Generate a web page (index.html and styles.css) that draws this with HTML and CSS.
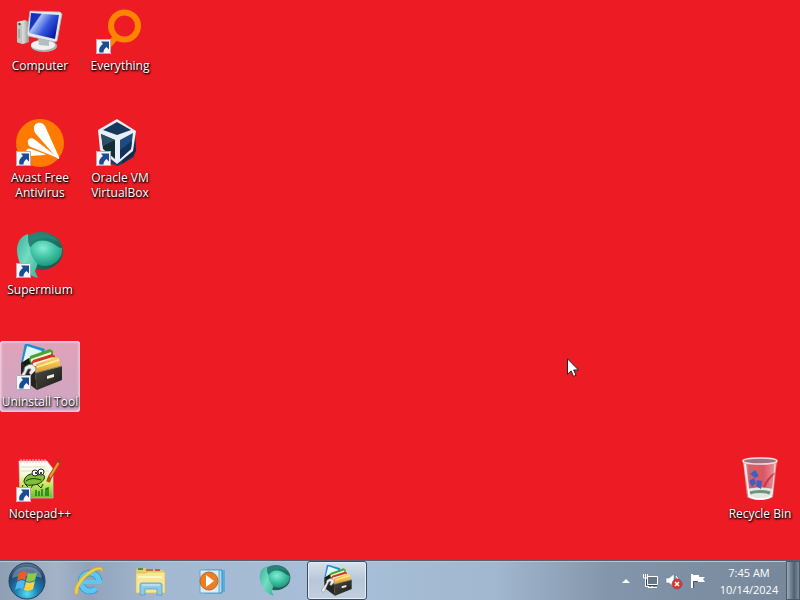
FILE: index.html
```html
<!DOCTYPE html>
<html lang="en">
<head>
<meta charset="utf-8">
<title>Desktop</title>
<link rel="stylesheet" href="styles.css">
</head>
<body>
<svg class="defs" aria-hidden="true">
  <defs>
    <linearGradient id="screen" x1="0" y1="0" x2="1" y2=".6"><stop offset="0" stop-color="#1029a5"/><stop offset=".3" stop-color="#1836c4"/><stop offset=".34" stop-color="#a9bff5"/><stop offset=".65" stop-color="#3556dd"/><stop offset="1" stop-color="#0a1aa5"/></linearGradient>
    <linearGradient id="metal" x1="0" y1="0" x2="1" y2="0"><stop offset="0" stop-color="#f4f4f0"/><stop offset=".6" stop-color="#cfd2cc"/><stop offset="1" stop-color="#8d928f"/></linearGradient>
    <radialGradient id="teal" cx=".4" cy=".3" r=".75"><stop offset="0" stop-color="#86ecd2"/><stop offset=".5" stop-color="#3fc4a4"/><stop offset="1" stop-color="#1d8f78"/></radialGradient>
    <linearGradient id="tealDark" x1="0" y1="0" x2="1" y2="1"><stop offset="0" stop-color="#2a8f7e"/><stop offset=".45" stop-color="#1d7a69"/><stop offset="1" stop-color="#244a45"/></linearGradient>
    <linearGradient id="blade" x1="0" y1="0" x2="1" y2="1"><stop offset="0" stop-color="#3fae98"/><stop offset=".5" stop-color="#74dcc2"/><stop offset="1" stop-color="#3bb398"/></linearGradient>
    <linearGradient id="folder" x1="0" y1="0" x2="0" y2="1"><stop offset="0" stop-color="#ffd766"/><stop offset="1" stop-color="#dc9324"/></linearGradient>
    <linearGradient id="box" x1="0" y1="0" x2="1" y2="1"><stop offset="0" stop-color="#4b4b42"/><stop offset="1" stop-color="#1b1c17"/></linearGradient>
    <linearGradient id="note" x1="0" y1="0" x2="0" y2="1"><stop offset="0" stop-color="#ffffff"/><stop offset=".35" stop-color="#f4fbd8"/><stop offset=".65" stop-color="#c4e85c"/><stop offset="1" stop-color="#63bd2b"/></linearGradient>
    <linearGradient id="glass" x1="0" y1="0" x2="1" y2="0"><stop offset="0" stop-color="#f1e5e6" stop-opacity=".9"/><stop offset=".18" stop-color="#b98a94" stop-opacity=".65"/><stop offset=".6" stop-color="#d0808b" stop-opacity=".6"/><stop offset="1" stop-color="#e9bdc0" stop-opacity=".85"/></linearGradient>
    <radialGradient id="orb" cx=".5" cy=".85" r=".85"><stop offset="0" stop-color="#59dcf2"/><stop offset=".35" stop-color="#1d83b5"/><stop offset=".75" stop-color="#1c456f"/><stop offset="1" stop-color="#637f99"/></radialGradient>
    <symbol id="arrow" viewBox="0 0 15 15">
      <rect width="15" height="15" fill="#f6f7fa"/>
      <path d="M.5.500h14v14H.5z" fill="none" stroke="#b9a9b2"/>
      <path d="M5 2.500h8v8l-2.500-2.500C8.500 9.500 7.500 11 7.500 13.500H3.500C2.500 10 4 7 7 5z" fill="#184d94"/>
    </symbol>
    <symbol id="supermium" viewBox="0 0 48 48">
      <ellipse cx="25" cy="19" rx="22" ry="19" fill="url(#tealDark)"/>
      <path d="M1 18C1 10 5 4 12 2c0 6 0 9 3 14 4 6 7 9 7 15l-3 8 3 7C9 43 1 31 1 18z" fill="url(#blade)"/>
      <path d="M14 17C16 10 24 7 31 9c8 2 10 7 15 7 1 8-4 14-11 17-7 2-13 1-16-4-2-4-5-7-5-12z" fill="url(#teal)"/>
      <path d="M12 9C20 0 34 0 42 9c-7-2-10-4-16-3-6 0-11 4-12 9z" fill="#2b8477"/>
    </symbol>
    <symbol id="uninstall" viewBox="0 0 48 48">
      <path d="M9-1l20 6-8 18-16-4z" fill="#1b8fd2"/>
      <path d="M11 2l15 5-7 12-12-1z" fill="#e2f5fb"/>
      <path d="M5 19l8-5 33 9-27 8z" fill="#191a15"/>
      <path d="M13 16l1-4 20-7 3 2v10l-20 7z" fill="#48a52d"/>
      <path d="M15 15l20-7v3l-20 7z" fill="#f3f8de"/>
      <path d="M15 20l2-4 19-6 3 2v9L19 28z" fill="#d23322"/>
      <path d="M17 19l20-6v3l-20 7z" fill="#fff1ea"/>
      <path d="M19 27l1-7 15-5 1-2 7 1 2 10-24 8z" fill="url(#folder)"/>
      <path d="M21 23l22-7" stroke="#fff1a1" stroke-width="1.500"/>
      <path d="M5 19l14 10 2 17L5 34z" fill="#25251f"/>
      <path d="M19 29l27-7v14L21 46z" fill="url(#box)"/>
      <path d="M19 29l27-7" stroke="#8a897c"/>
      <path d="M31 32l7-2v3l-7 2z" fill="#f1f0df"/>
      <path d="M12 21c4-2 8 1 8 5l-5 5-2-2 2-4-3 0-3 6-4 9c-2 2-5 0-4-3l7-10c0-3 1-5 4-6z" fill="#edf0f1" stroke="#777d80" stroke-width=".8"/>
    </symbol>
  </defs>
</svg>

<main class="desktop">
  <div class="icons">
    <button class="shortcut" type="button">
      <svg class="art" viewBox="0 0 48 48" aria-hidden="true">
        <path d="M1 14l8-2 4 2v20l-6 2-6-2z" fill="url(#metal)"/>
        <path d="M1 14l5 2v20l-5-2z" fill="#bfc5c1"/><circle cx="3.500" cy="16" r="1.200" fill="#2f4b42"/>
        <path d="M3 21v9" stroke="#858d88"/>
        <ellipse cx="28" cy="38" rx="13" ry="6" fill="#aeb6b5"/><ellipse cx="27" cy="37" rx="12" ry="5" fill="#eff2f0"/>
        <path d="M22 30l11 2v6l-10-1z" fill="#b5bfc3"/>
        <path d="M14 3l30 1 2 2-5 27-2 1-27-6-1-2z" fill="#e4e8e7" stroke="#aab0b7" stroke-width=".8"/>
        <path d="M15 5l28 2-4 24-26-6z" fill="url(#screen)"/>
      </svg>
      <span class="name">Computer</span>
    </button>
    <button class="shortcut" type="button">
      <svg class="art" viewBox="0 0 48 48" aria-hidden="true">
        <path d="M20 29l-8 9" stroke="#ff8500" stroke-width="6"/>
        <circle cx="28.500" cy="18" r="13.500" fill="none" stroke="#ff8500" stroke-width="6"/>
        <use href="#arrow" x="0" y="31" width="15" height="15"/>
      </svg>
      <span class="name">Everything</span>
    </button>
    <button class="shortcut" type="button">
      <svg class="art" viewBox="0 0 48 48" aria-hidden="true">
        <circle cx="24" cy="23" r="24" fill="#ff7a00"/>
        <path d="M18 9c-1-6 7-9 11-3l14 31c1 2-1 3-2 1L20 14c-1-1-2-3-2-5z" fill="#fff"/>
        <path d="M12 23c-1-4 3-6 6-4l22 17c2 1 1 2-1 1L15 27c-2-1-3-2-3-4z" fill="#fff"/>
        <path d="M10 32c0-3 2-4 5-3l14 5c1 1 0 1-1 1l-13 1c-3 0-5-1-5-4z" fill="#fff"/>
        <use href="#arrow" x="0" y="31" width="15" height="15"/>
      </svg>
      <span class="name">Avast Free Antivirus</span>
    </button>
    <button class="shortcut" type="button">
      <svg class="art" viewBox="0 0 48 48" aria-hidden="true">
        <path d="M10 33l27-3 1 7-16 9-11-4z" fill="#1d3c67"/>
        <path d="M39 11l1 20-2 4-12 9z" fill="#152a4a"/>
        <path d="M21-1L2 10l2 20 17 14 16-13 3-20z" fill="#e9f0f5"/>
        <path d="M21 2l14 8-14 5L7 10z" fill="#17375f"/>
        <path d="M5 14l14 6v19L7 29z" fill="#102e35"/>
        <path d="M5 14l14 6-12 6z" fill="#2c4f69"/>
        <path d="M24 20l13-7-2 16-11 10z" fill="#1e4c7f"/>
        <path d="M24 30l12-9-1 8-11 10z" fill="#13315c"/>
        <use href="#arrow" x="0" y="31" width="15" height="15"/>
      </svg>
      <span class="name">Oracle VM VirtualBox</span>
    </button>
    <button class="shortcut" type="button">
      <svg class="art" viewBox="0 0 48 48" aria-hidden="true">
        <use href="#supermium" width="48" height="48"/>
        <use href="#arrow" x="0" y="31" width="15" height="15"/>
      </svg>
      <span class="name">Supermium</span>
    </button>
    <button class="shortcut selected" type="button">
      <svg class="art" viewBox="0 0 48 48" aria-hidden="true">
        <use href="#uninstall" width="48" height="48"/>
        <use href="#arrow" x="0" y="31" width="15" height="15"/>
      </svg>
      <span class="name">Uninstall Tool</span>
    </button>
    <button class="shortcut" type="button">
      <svg class="art" viewBox="0 0 48 48" aria-hidden="true">
        <path d="M3 5h28l6 8v29H4z" fill="url(#note)" stroke="#cfcfc5" stroke-width=".7"/>
        <path d="M5 3v4M8 3v4M11 3v4M14 3v4M17 3v4M20 3v4M23 3v4M26 3v4M29 3v4" stroke="#d8c8c8"/>
        <path d="M5 11h24M5 15h28" stroke="#d6dccd"/>
        <path d="M8 25c1-6 8-9 14-6 5-2 8 1 6 4-2 4-7 6-12 6-5 1-8-1-8-4z" fill="#7dbf35" stroke="#202f12"/>
        <path d="M10 25c4-3 9-3 15-1M9 28l5 5 3-4M21 28l4 4 2-4M12 33c-4 3-7 0-5-4" fill="none" stroke="#1c2f10"/>
        <circle cx="19" cy="17" r="3" fill="#fff" stroke="#222"/><circle cx="25" cy="16" r="3" fill="#fff" stroke="#222"/>
        <circle cx="20" cy="17" r="1"/><circle cx="25" cy="17" r="1"/>
        <path d="M20 40v-6m3 6v-5m3 5v-7m4 7v-7l2-1v8" fill="none" stroke="#1c7a1b" stroke-width="1.500"/>
        <path d="M44 5L34 21l-2 5" stroke="#b7491b" stroke-width="4" fill="none"/>
        <path d="M43 6l-9 15" stroke="#f19a31" stroke-width="2"/><path d="M42 2l4 3-2 3-4-3z" fill="#b63227"/>
        <use href="#arrow" x="0" y="31" width="15" height="15"/>
      </svg>
      <span class="name">Notepad++</span>
    </button>
    <button class="shortcut bin" type="button">
      <svg class="art" viewBox="0 0 48 48" aria-hidden="true">
        <path d="M7 4l4 37c3 4 22 4 26 0l4-37z" fill="url(#glass)"/>
        <path d="M12 33c6-2 18-2 25 0l-1 8c-6 4-20 3-24 0z" fill="#dfe9e1"/>
        <path d="M14 37c5-2 15-2 20 0" fill="none" stroke="#71917d" stroke-width="3"/>
        <path d="M13 40c6 4 17 4 22 0" fill="none" stroke="#fff" stroke-width="2"/>
        <path d="M14 18l5-4 4 6-4 2zM21 24l5 1-1 8-5-3zM13 25l5-3 2 5-4 4z" fill="#405fc1"/>
        <path d="M28 31c3-7 7-11 11-14" fill="none" stroke="#c93446" stroke-width="2"/>
        <path d="M9 8l4 31" stroke="#fff" stroke-opacity=".75" stroke-width="2"/>
        <path d="M39 8l-3 31" stroke="#fff" stroke-opacity=".65"/>
        <ellipse cx="24" cy="5" rx="17" ry="3" fill="#9b7480" stroke="#ede0e1" stroke-width="1.500"/>
      </svg>
      <span class="name">Recycle Bin</span>
    </button>
  </div>
  <svg class="pointer" viewBox="0 0 12 19" aria-hidden="true"><path d="M.5.800v15.500l3.600-3.400 2.400 5.500 2.600-1.100-2.400-5.300h4.800z" fill="#fff" stroke="#222"/></svg>
</main>

<footer class="taskbar">
  <button class="start" type="button" aria-label="Start">
    <svg class="orb" viewBox="0 0 38 38" aria-hidden="true">
      <circle cx="19" cy="19" r="18" fill="url(#orb)" stroke="#24405f"/>
      <path d="M4 16C6 1 32 1 34 16c-8-3-22-3-30 0z" fill="#fff" fill-opacity=".28"/>
      <path d="M11 11c3-2 5-2 8-1l-2 8c-3-1-5-1-8 1z" fill="#ef5a28"/>
      <path d="M20 11c3 1 6 1 9-1l-2 8c-3 2-6 2-9 1z" fill="#8fca45"/>
      <path d="M9 20c3-2 5-2 8-1l-2 8c-3-1-5-1-8 1z" fill="#54b5ee"/>
      <path d="M18 20c3 1 6 1 9-1l-2 8c-3 2-6 2-9 1z" fill="#ffd13d"/>
    </svg>
  </button>
  <nav class="apps" aria-label="Applications">
    <button class="app" type="button" aria-label="Internet Explorer">
      <svg viewBox="0 0 32 32" aria-hidden="true">
        <circle cx="17" cy="17" r="9" fill="none" stroke="#2f93cf" stroke-width="6.500" pathLength="100" stroke-dasharray="87 13" stroke-dashoffset="-13"/>
        <circle cx="17" cy="17" r="9" fill="none" stroke="#5fc6f0" stroke-width="5" pathLength="100" stroke-dasharray="87 13" stroke-dashoffset="-13"/>
        <path d="M10 15h19v4H10z" fill="#5fc6f0"/>
        <path d="M3 30C-2 24 9 8 22 3c6-2 9 0 7 5 0-4-3-4-7-2C12 11 4 22 5 28z" fill="#f3cf45" stroke="#d5a520" stroke-width=".5"/>
      </svg>
    </button>
    <button class="app" type="button" aria-label="Windows Explorer">
      <svg viewBox="0 0 32 32" aria-hidden="true">
        <path d="M1 5l2-2h7l2 2h16l2 3v20H1z" fill="#e9cc67"/>
        <path d="M3 3h5v2H3z" fill="#479447"/><path d="M11 4h7v2h-7z" fill="#b37841"/><path d="M20 4h5v2h-5z" fill="#ca5942"/>
        <path d="M1 8h10l2-1h17v21H1z" fill="#f7e69a" stroke="#d7b952" stroke-width=".7"/>
        <path d="M3 12h24" stroke="#fff4bc" stroke-width="2"/>
        <path d="M5 30V20q0-2 2-2h18q2 0 2 2v10h-5v-6H10v6z" fill="#8fcbe8" stroke="#549bc2" stroke-width=".8"/>
        <path d="M7 20h18" stroke="#d6f4fc"/>
      </svg>
    </button>
    <button class="app" type="button" aria-label="Windows Media Player">
      <svg viewBox="0 0 32 32" aria-hidden="true">
        <path d="M11 5h17v22H11z" fill="#5faeda"/><path d="M8 5h17v23H8z" fill="#add9ef" stroke="#398bbd"/><path d="M3 5h19v23H3z" fill="#d9edf6" stroke="#60a8cf"/>
        <circle cx="12" cy="16" r="9" fill="#ed7d21" stroke="#c86422"/><path d="M9 10l8 6-8 6z" fill="#fff"/>
      </svg>
    </button>
    <button class="app" type="button" aria-label="Supermium"><svg viewBox="0 0 48 48" aria-hidden="true"><use href="#supermium" width="48" height="48"/></svg></button>
    <button class="app active" type="button" aria-label="Uninstall Tool"><svg viewBox="0 0 48 48" aria-hidden="true"><use href="#uninstall" width="48" height="48"/></svg></button>
  </nav>
  <div class="tray">
    <button class="notice" type="button" aria-label="Show hidden icons"><svg viewBox="0 0 16 16" aria-hidden="true"><path d="M4 10l4-4 4 4z" fill="#fff"/></svg></button>
    <button class="notice" type="button" aria-label="Network">
      <svg viewBox="0 0 16 16" aria-hidden="true"><path d="M5.500 3.500h10v8h-10z" fill="#65758a" stroke="#fff"/><path d="M10 12v3M6 14.500h9M1.500 1v4h4V1M3.500 1v12.500H7" fill="none" stroke="#fff"/><path d="M4.500 6v7M6 12.500h9" stroke="#354152" fill="none"/></svg>
    </button>
    <button class="notice" type="button" aria-label="Volume muted">
      <svg viewBox="0 0 16 16" aria-hidden="true"><path d="M0 5h3l5-4v13l-5-4H0z" fill="#fff" stroke="#637085" stroke-width=".5"/><path d="M10 3q3 3 2 7" stroke="#fff" fill="none"/><circle cx="11" cy="11" r="5" fill="#d63835" stroke="#a92e32" stroke-width=".5"/><path d="M9 9l4 4m0-4l-4 4" stroke="#fff" stroke-width="1.500"/></svg>
    </button>
    <button class="notice" type="button" aria-label="Action Center">
      <svg viewBox="0 0 16 16" aria-hidden="true"><path d="M2 1v14" stroke="#fff" stroke-width="2"/><path d="M3 2h6v2h6l-2 2 2 3H8V8H3z" fill="#fff"/><path d="M3.500 15V8.500h4" fill="none" stroke="#435064"/></svg>
    </button>
    <time class="clock" datetime="2024-10-14T07:45"><span>7:45 AM</span><span>10/14/2024</span></time>
    <button class="peek" type="button" aria-label="Show desktop"></button>
  </div>
</footer>
</body>
</html>
```
FILE: styles.css
```css
* { box-sizing: border-box; }

body {
  margin: 0;
  min-height: 100vh;
  display: flex;
  flex-direction: column;
  background: #ed1c24;
  font-family: "Open Sans", "Noto Sans", sans-serif;
  font-size: 12px;
  line-height: 15px;
  color: #fff;
}

button {
  border: 0;
  padding: 0;
  background: none;
  color: inherit;
  font: inherit;
}

svg { display: block; overflow: visible; }

.defs { position: absolute; width: 0; height: 0; }

.desktop { flex: 1; position: relative; }

.icons {
  display: grid;
  grid-template-columns: 80px 80px 1fr 80px;
  grid-auto-rows: 112px;
}

.shortcut {
  display: flex;
  flex-direction: column;
  align-items: center;
  align-self: start;
  gap: 2px;
  min-height: 70px;
  margin-top: 5px;
  padding: 2px 0;
  border: 1px solid transparent;
  border-radius: 2px;
}

.shortcut:nth-child(odd), .shortcut.selected { grid-column: 1; }
.shortcut.bin { grid-column: 4; grid-row: 5; }

.art { width: 48px; height: 48px; }

.name {
  max-width: 78px;
  padding: 0 2px;
  text-align: center;
  text-shadow: 1px 1px 2px #000, 0 1px 2px #000;
}

.selected {
  border-color: #f3c2d4;
  background: linear-gradient(#dfa3b8, #cda6c4);
  box-shadow: inset 0 0 2px #fff;
}

.selected .name { padding: 0; white-space: nowrap; }

.pointer {
  position: absolute;
  left: 567px;
  top: 358px;
  width: 12px;
  height: 19px;
}

.taskbar {
  display: flex;
  height: 40px;
  border-top: 1px solid #56606e;
  background: linear-gradient(90deg, #8e9eb3 0, #a4b3c8 7%, #91a3bb 11%, #a3b8d1 20%, #a8bfd9 43%, #a1b7cf 62%, #8395aa 76%, #76879b 100%);
  box-shadow: inset 0 1px #b8c6d5;
}

.start {
  width: 54px;
  display: grid;
  place-items: center;
}

.orb { width: 38px; height: 38px; }

.apps {
  display: flex;
  gap: 2px;
  margin-left: 5px;
}

.app {
  width: 60px;
  display: grid;
  place-items: center;
  border-radius: 3px;
}

.app svg { width: 32px; height: 32px; }

.active {
  border: 1px solid #3c4b61;
  background: linear-gradient(#d8e0ea, #b7c6da 50%, #c2cfdf);
  box-shadow: inset 0 0 0 1px #e7eef6;
}

.tray {
  display: flex;
  align-items: center;
  margin-left: auto;
}

.notice {
  width: 24px;
  display: grid;
  place-items: center;
}

.notice svg { width: 16px; height: 16px; }

.clock {
  width: 74px;
  display: grid;
  gap: 2px;
  margin-left: 2px;
  font-size: 11px;
  text-align: center;
}

.peek {
  align-self: stretch;
  width: 14px;
  border: 1px solid #4b596a;
  background: linear-gradient(90deg, #9ba9b8, #526172 60%, #7f8fa1);
}
```
